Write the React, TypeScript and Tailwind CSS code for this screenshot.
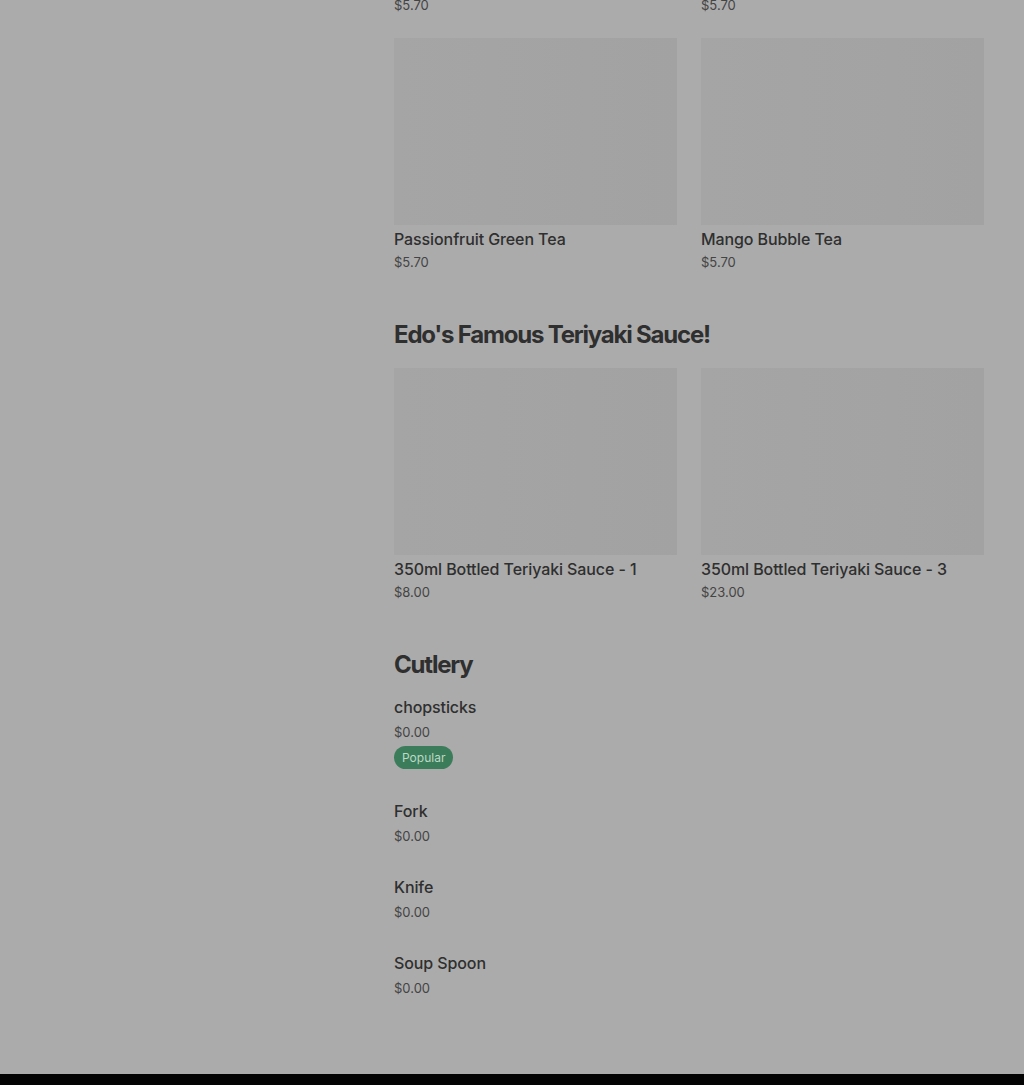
const font = { fontFamily: 'Inter, "Liberation Sans", sans-serif' }

type Item = { name: string; price: string }

function Card({ item }: { item?: Item }) {
  return (
    <div className="flex flex-col">
      <div className="h-[187px] w-full bg-[#a3a3a3] bg-gradient-to-r from-[#a5a5a5] to-[#a2a2a2]" />
      {item && (
        <>
          <div className="mt-[3px] text-[16px] font-medium leading-[22px] tracking-[-0.1px] text-[#2f2f2f]">{item.name}</div>
          <div className="mt-[3px] text-[13px] leading-[18px] text-[#444]">{item.price}</div>
        </>
      )}
    </div>
  )
}

function Grid({ items }: { items: Item[] }) {
  return (
    <div className="grid grid-cols-2 gap-x-6">
      {items.map((it) => (
        <Card key={it.name} item={it} />
      ))}
    </div>
  )
}

function Heading({ children }: { children: string }) {
  return (
    <h2 className="text-[24px] font-bold leading-[32px] tracking-[-1.2px] text-[#2f2f2f]">{children}</h2>
  )
}

function ListItem({ name, popular, first }: { name: string; popular?: boolean; first?: boolean }) {
  return (
    <div className={first ? 'mt-[15px]' : 'mt-[31px]'}>
      <div className="text-[16px] font-medium leading-[22px] tracking-[-0.1px] text-[#2f2f2f]">{name}</div>
      <div className="mt-[5px] text-[13px] leading-[18px] text-[#444]">$0.00</div>
      {popular && (
        <span className="mt-[5px] inline-flex h-[23px] items-center rounded-full bg-[#3b7c5a] px-2 text-[12px] text-[#bcd9c6]">
          Popular
        </span>
      )}
    </div>
  )
}

export default function App() {
  return (
    <div className="flex min-h-[1085px] flex-col overflow-hidden bg-[#ababab]" style={font}>
      <main className="flex-1 pl-[394px]">
        <div className="w-[590px]">
          {/* previous row tail */}
          <div className="-mt-[4px] grid grid-cols-2 gap-x-6 text-[13px] leading-[18px] text-[#444]">
            <div>$5.70</div>
            <div>$5.70</div>
          </div>

          <div className="mt-6">
            <Grid
              items={[
                { name: 'Passionfruit Green Tea', price: '$5.70' },
                { name: 'Mango Bubble Tea', price: '$5.70' },
              ]}
            />
          </div>

          <div className="mt-12">
            <Heading>Edo's Famous Teriyaki Sauce!</Heading>
            <div className="mt-[17px]">
              <Grid
                items={[
                  { name: '350ml Bottled Teriyaki Sauce - 1', price: '$8.00' },
                  { name: '350ml Bottled Teriyaki Sauce - 3', price: '$23.00' },
                ]}
              />
            </div>
          </div>

          <div className="mt-12">
            <Heading>Cutlery</Heading>
            <ListItem name="chopsticks" popular first />
            <ListItem name="Fork" />
            <ListItem name="Knife" />
            <ListItem name="Soup Spoon" />
          </div>
        </div>
      </main>
      <footer className="mt-[77px] h-[60px] bg-[#030303]" />
    </div>
  )
}
